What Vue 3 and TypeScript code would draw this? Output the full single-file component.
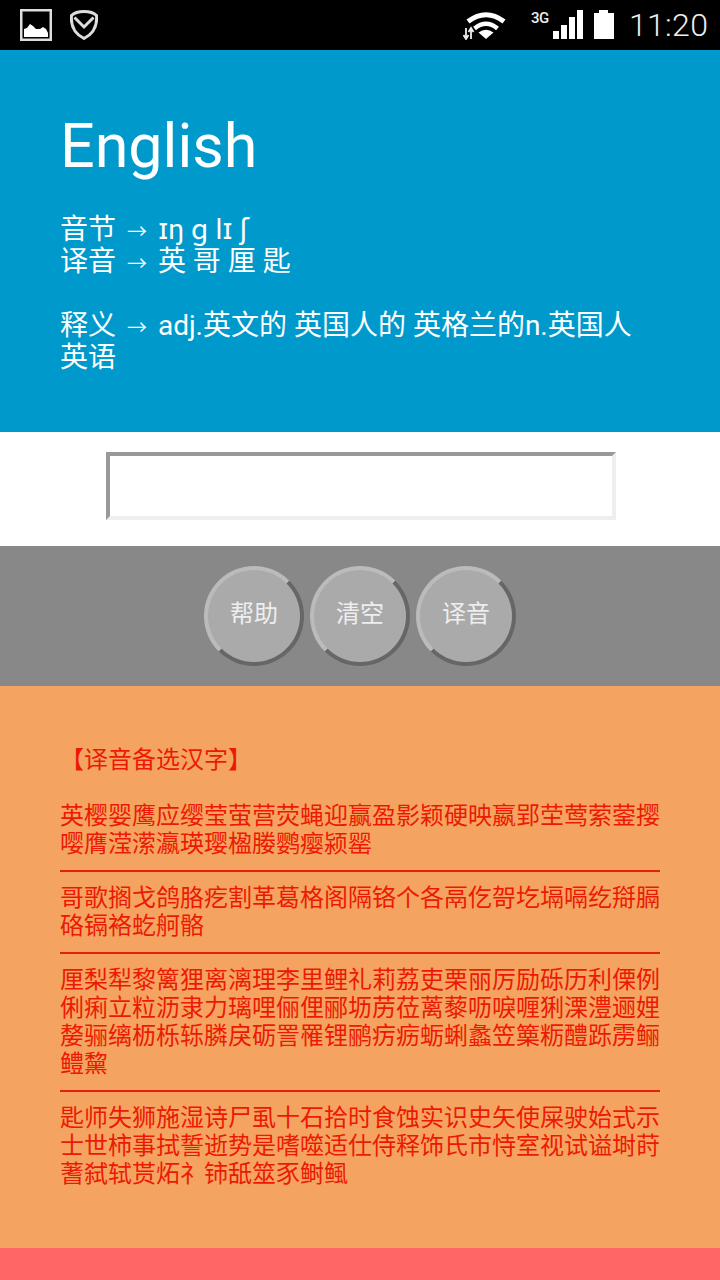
<script setup lang="ts">
const groups: string[] = [
  '英樱婴鹰应缨莹萤营荧蝇迎赢盈影颖硬映嬴郢茔莺萦蓥撄嘤膺滢潆瀛瑛璎楹媵鹦瘿颍罂',
  '哥歌搁戈鸽胳疙割革葛格阁隔铬个各鬲仡哿圪塥嗝纥搿膈硌镉袼虼舸骼',
  '厘梨犁黎篱狸离漓理李里鲤礼莉荔吏栗丽厉励砾历利傈例俐痢立粒沥隶力璃哩俪俚郦坜苈莅蓠藜呖唳喱猁溧澧逦娌嫠骊缡枥栎轹膦戾砺詈罹锂鹂疠疬蛎蜊蠡笠篥粝醴跞雳鲡鳢黧',
  '匙师失狮施湿诗尸虱十石拾时食蚀实识史矢使屎驶始式示士世柿事拭誓逝势是嗜噬适仕侍释饰氏市恃室视试谥埘莳蓍弑轼贳炻礻铈舐筮豕鲥鲺',
]
const buttons: string[] = ['帮助', '清空', '译音']
</script>

<template>
  <div class="page">
    <header class="status">
      <svg class="ic-pic" width="32" height="32" viewBox="0 0 32 32">
        <rect x="1.25" y="1.25" width="29.5" height="29.5" fill="none" stroke="#ddd" stroke-width="2.5" />
        <path d="M4 28V20L7 19L10 15L13 17L16 20L20 20L23 18L26 20L28 24V28Z" fill="#fff" />
      </svg>
      <svg class="ic-shield" width="28" height="30" viewBox="0 0 28 30">
        <path d="M14 1.500C19 1.500 24 3 26.500 5.500C27.500 16 23 24 14 28.500C5 24 .5 16 1.500 5.500C4 3 9 1.500 14 1.500Z" fill="none" stroke="#ddd" stroke-width="3" />
        <path d="M4.500 7.500L14 17L23.500 7.500" fill="none" stroke="#ddd" stroke-width="3" />
      </svg>
      <div class="status-right">
        <svg class="ic-wifi" width="45" height="28" viewBox="0 0 45 28">
          <path d="M6 9.500Q24 -4 42 9.500" fill="none" stroke="#fff" stroke-width="5" />
          <path d="M12.500 16.500Q24 7 35.500 16.500" fill="none" stroke="#fff" stroke-width="4.500" />
          <path d="M24 27L16.500 20.500Q24 15 31.500 20.500Z" fill="#fff" />
          <path d="M4 16V25M1.500 23L4 27L6.500 23" fill="none" stroke="#eee" stroke-width="1.800" />
          <path d="M9 27V18M6.500 20L9 16L11.500 20" fill="none" stroke="#eee" stroke-width="1.800" />
        </svg>
        <div class="net">
          <span class="g3">3G</span>
          <svg width="31" height="30" viewBox="0 0 31 30">
            <rect x="0" y="21" width="6" height="8" fill="#fff" />
            <rect x="8" y="15" width="6" height="14" fill="#fff" />
            <rect x="16" y="7" width="6" height="22" fill="#fff" />
            <rect x="24" y="0" width="6" height="29" fill="#fff" />
          </svg>
        </div>
        <svg class="ic-bat" width="20" height="30" viewBox="0 0 20 30">
          <path d="M5 0H14V3H20V29H0V3H5Z" fill="#fff" />
        </svg>
        <span class="clock">11:20</span>
      </div>
    </header>

    <section class="hero">
      <h1 class="word">English</h1>
      <p class="info">音节 <span class="arrow">→</span> ɪŋ ɡ lɪ ʃ</p>
      <p class="info">译音 <span class="arrow">→</span> 英 哥 厘 匙</p>
      <p class="info meaning">释义 <span class="arrow">→</span> adj.英文的 英国人的 英格兰的n.英国人 英语</p>
    </section>

    <section class="entry">
      <input class="field" type="text" aria-label="word" />
    </section>

    <nav class="actions">
      <button v-for="b in buttons" :key="b" class="round" type="button">{{ b }}</button>
    </nav>

    <section class="chars">
      <p class="chars-title">【译音备选汉字】</p>
      <template v-for="(g, i) in groups" :key="i">
        <div v-if="i > 0" class="rule"></div>
        <p class="group">{{ g }}</p>
      </template>
    </section>

    <footer class="foot"></footer>
  </div>
</template>

<style>
html, body { margin: 0; padding: 0; background: #fff; }
</style>

<style scoped>
.page {
  width: 720px;
  height: 1280px;
  display: flex;
  flex-direction: column;
  overflow: hidden;
  font-family: Roboto, "Noto Sans CJK SC", "DejaVu Sans", sans-serif;
}
.status {
  height: 50px;
  flex: none;
  background: #000;
  display: flex;
  align-items: center;
  padding: 0 10px 0 20px;
  box-sizing: border-box;
}
.ic-shield { margin-left: 18px; }
.status-right {
  margin-left: auto;
  display: flex;
  align-items: center;
  height: 50px;
}
.ic-wifi { margin-top: 2px; }
.net {
  margin-left: 24px;
  display: flex;
  align-items: flex-start;
}
.g3 {
  color: #eee;
  font-size: 15px;
  font-weight: 500;
  line-height: 14px;
  width: 22px;
  margin-top: 1px;
  letter-spacing: -.5px;
}
.ic-bat { margin-left: 10px; }
.clock {
  margin-left: 15px;
  width: 81px;
  color: #eee;
  font-size: 32px;
  font-weight: 300;
  line-height: 52px;
  letter-spacing: .3px;
}
.hero {
  flex: none;
  height: 382px;
  box-sizing: border-box;
  background: #0099cc;
  color: #fff;
  padding: 61px 60px 0;
}
.word {
  margin: 0 0 33px;
  font-size: 61px;
  font-weight: 400;
  line-height: 70px;
  color: #fff;
}
.info {
  margin: 0;
  font-size: 28px;
  line-height: 32px;
}
.arrow {
  display: inline-block;
  width: 28px;
  text-align: center;
  font-size: 20px;
  line-height: 20px;
}
.meaning { margin-top: 32px; }
.entry {
  flex: none;
  height: 114px;
  background: #fff;
  display: flex;
  justify-content: center;
  padding-top: 20px;
  box-sizing: border-box;
  padding-left: 2px;
}
.field {
  width: 510px;
  height: 68px;
  box-sizing: border-box;
  background: #fff;
  border-width: 4px;
  border-style: solid;
  border-color: #999 #eee #eee #999;
  outline: none;
  padding: 0;
}
.actions {
  flex: none;
  height: 140px;
  background: #888;
  display: flex;
  justify-content: center;
  align-items: center;
  gap: 6px;
}
.round {
  width: 100px;
  height: 100px;
  box-sizing: border-box;
  border-radius: 50%;
  border-width: 4px;
  border-style: solid;
  border-color: #bbb #666 #666 #bbb;
  background: #aaa;
  color: #eee;
  font-family: inherit;
  font-size: 24px;
  line-height: 28px;
  padding: 0 0 4px;
}
.chars {
  flex: none;
  height: 562px;
  box-sizing: border-box;
  background: #f4a460;
  color: #ec1a05;
  padding: 60px 60px 0;
  font-size: 24px;
  line-height: 28px;
}
.chars-title { margin: 0 0 28px; }
.group { margin: 0; }
.rule {
  height: 2px;
  background: #e2200c;
  margin: 12px 0;
}
.foot {
  flex: 1;
  background: #ff6666;
}
</style>
